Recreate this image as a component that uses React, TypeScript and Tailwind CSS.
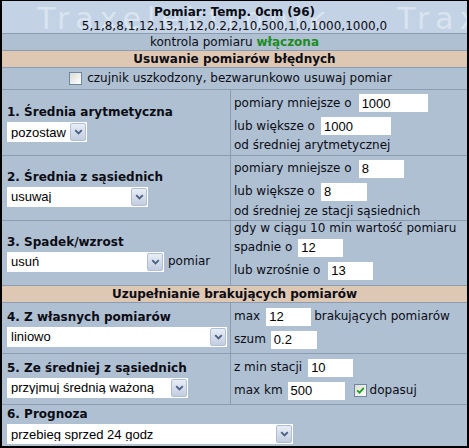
import React from "react";

function Chevron() {
  return (
    <svg width="9" height="6" viewBox="0 0 9 6">
      <path d="M1.2 1.2 L4.5 4.5 L7.8 1.2" fill="none" stroke="#4d6185" strokeWidth="1.9" />
    </svg>
  );
}

function Select({ value, className }: { value: string; className: string }) {
  return (
    <div className={`flex h-[20px] shrink-0 items-center bg-white ${className}`}>
      <span className="flex-1 overflow-hidden whitespace-nowrap pl-[4px] font-['Liberation_Sans',Arial,sans-serif] text-[13px] leading-none text-black">
        {value}
      </span>
      <span className="mr-[1px] flex h-[18px] w-[16px] items-center justify-center rounded-[2px] border border-[#b0bfd4] bg-linear-to-b from-[#e8eef6] to-[#c2cde0]">
        <Chevron />
      </span>
    </div>
  );
}

function Field({ value, className }: { value: string; className: string }) {
  return (
    <span
      className={`inline-flex h-[18px] shrink-0 items-center bg-white pl-[3px] font-['Liberation_Sans',Arial,sans-serif] text-[13px] leading-none text-black ${className}`}
    >
      {value}
    </span>
  );
}

function Check({ checked }: { checked?: boolean }) {
  return (
    <span className="flex h-[13px] w-[13px] shrink-0 items-center justify-center border border-[#6f86a3] bg-linear-to-br from-[#dcdcd4] to-[#ffffff]">
      {checked ? (
        <svg width="9" height="9" viewBox="0 0 9 9">
          <path d="M1.2 4.3 L3.5 6.6 L7.8 1.8" fill="none" stroke="#21a121" strokeWidth="1.8" />
        </svg>
      ) : null}
    </span>
  );
}

function Line({ children, h = "h-[23px]" }: { children: React.ReactNode; h?: string }) {
  return <div className={`flex items-center whitespace-nowrap ${h}`}>{children}</div>;
}

export default function App() {
  return (
    <div className="h-[448px] w-[469px] overflow-hidden border-b-2 border-l-2 border-r-2 border-t border-black bg-[#afc0d3] font-['DejaVu_Sans',Verdana,sans-serif] text-[12px] leading-[15px] text-[#0c0c14]">
      {/* title */}
      <div className="relative h-[33px] overflow-hidden border-b border-[#8c9db2] bg-[#c3d3e5]">
        <span
          aria-hidden="true"
          className="pointer-events-none absolute left-[-325px] top-[3px] select-none whitespace-nowrap text-[30px] leading-none tracking-[6px] text-[#d9e4f0]"
        >
          Traxelektronik
        </span>
        <span
          aria-hidden="true"
          className="pointer-events-none absolute left-[35px] top-[3px] select-none whitespace-nowrap text-[30px] leading-none tracking-[6px] text-[#d9e4f0]"
        >
          Traxelektronik
        </span>
        <span
          aria-hidden="true"
          className="pointer-events-none absolute left-[395px] top-[3px] select-none whitespace-nowrap text-[30px] leading-none tracking-[6px] text-[#d9e4f0]"
        >
          Traxelektronik
        </span>
        <div className="relative flex flex-col items-center pt-[4px] leading-[14px]">
          <div className="font-bold">Pomiar: Temp. 0cm (96)</div>
          <div>5,1,8,8,1,12,13,1,12,0.2,2,10,500,1,0,1000,1000,0</div>
        </div>
      </div>

      {/* kontrola */}
      <div className="flex h-[17px] items-center justify-center border-b border-[#8c9db2]">
        <span>
          kontrola pomiaru <span className="font-bold text-[#1e8c1e]">włączona</span>
        </span>
      </div>

      {/* header 1 */}
      <div className="flex h-[17px] items-center justify-center border-b border-[#8c9db2] bg-[#dfc8b3] font-bold">
        Usuwanie pomiarów błędnych
      </div>

      {/* checkbox row */}
      <div className="flex h-[22px] items-center justify-center gap-[5px] border-b border-[#8c9db2] pr-[8px]">
        <Check />
        <span className="whitespace-nowrap">czujnik uszkodzony, bezwarunkowo usuwaj pomiar</span>
      </div>

      {/* row 1 */}
      <div className="flex h-[66px] border-b border-[#8c9db2]">
        <div className="flex w-[229px] shrink-0 flex-col justify-center gap-[2px] border-r border-[#8c9db2] pl-[5px] pt-[2px]">
          <div className="font-bold">1. Średnia arytmetyczna</div>
          <Select value="pozostaw" className="w-[80px]" />
        </div>
        <div className="flex flex-1 flex-col justify-center pl-[3px]">
          <Line>
            <span>pomiary mniejsze o</span>
            <Field value="1000" className="ml-[7px] w-[69px]" />
          </Line>
          <Line>
            <span>lub większe o</span>
            <Field value="1000" className="ml-[6px] w-[70px]" />
          </Line>
          <Line h="h-[16px]">od średniej arytmetycznej</Line>
        </div>
      </div>

      {/* row 2 */}
      <div className="flex h-[65px] border-b border-[#8c9db2]">
        <div className="flex w-[229px] shrink-0 flex-col justify-center gap-[2px] border-r border-[#8c9db2] pl-[5px]">
          <div className="font-bold">2. Średnia z sąsiednich</div>
          <Select value="usuwaj" className="w-[141px]" />
        </div>
        <div className="flex flex-1 flex-col justify-center pl-[3px]">
          <Line>
            <span>pomiary mniejsze o</span>
            <Field value="8" className="ml-[7px] w-[45px]" />
          </Line>
          <Line>
            <span>lub większe o</span>
            <Field value="8" className="ml-[6px] w-[46px]" />
          </Line>
          <Line h="h-[16px]">od średniej ze stacji sąsiednich</Line>
        </div>
      </div>

      {/* row 3 */}
      <div className="flex h-[65px] border-b border-[#8c9db2]">
        <div className="flex w-[229px] shrink-0 flex-col justify-center gap-[2px] border-r border-[#8c9db2] pl-[5px]">
          <div className="font-bold">3. Spadek/wzrost</div>
          <div className="flex items-center">
            <Select value="usuń" className="w-[157px]" />
            <span className="ml-[4px]">pomiar</span>
          </div>
        </div>
        <div className="flex flex-1 flex-col justify-start pl-[3px]">
          <Line h="h-[15px]">gdy w ciągu 10 min wartość pomiaru</Line>
          <Line>
            <span>spadnie o</span>
            <Field value="12" className="ml-[6px] w-[45px]" />
          </Line>
          <Line>
            <span>lub wzrośnie o</span>
            <Field value="13" className="ml-[8px] w-[45px]" />
          </Line>
        </div>
      </div>

      {/* header 2 */}
      <div className="flex h-[17px] items-center justify-center border-b border-[#8c9db2] bg-[#dfc8b3] font-bold">
        Uzupełnianie brakujących pomiarów
      </div>

      {/* row 4 */}
      <div className="flex h-[51px] border-b border-[#8c9db2]">
        <div className="flex w-[229px] shrink-0 flex-col justify-center gap-[2px] border-r border-[#8c9db2] pl-[5px]">
          <div className="font-bold">4. Z własnych pomiarów</div>
          <Select value="liniowo" className="w-[220px]" />
        </div>
        <div className="flex flex-1 flex-col justify-center pl-[3px]">
          <Line>
            <span>max</span>
            <Field value="12" className="ml-[6px] w-[45px]" />
            <span className="ml-[3px]">brakujących pomiarów</span>
          </Line>
          <Line>
            <span>szum</span>
            <Field value="0.2" className="ml-[5px] w-[46px]" />
          </Line>
        </div>
      </div>

      {/* row 5 */}
      <div className="flex h-[51px] border-b border-[#8c9db2]">
        <div className="flex w-[229px] shrink-0 flex-col justify-center gap-[2px] border-r border-[#8c9db2] pl-[5px]">
          <div className="font-bold">5. Ze średniej z sąsiednich</div>
          <Select value="przyjmuj średnią ważoną" className="w-[181px]" />
        </div>
        <div className="flex flex-1 flex-col justify-center pl-[3px]">
          <Line>
            <span>z min stacji</span>
            <Field value="10" className="ml-[6px] w-[45px]" />
          </Line>
          <Line>
            <span>max km</span>
            <Field value="500" className="ml-[5px] w-[57px]" />
            <span className="ml-[9px]">
              <Check checked />
            </span>
            <span className="ml-[3px]">dopasuj</span>
          </Line>
        </div>
      </div>

      {/* row 6 */}
      <div className="flex h-[41px] flex-col justify-center gap-[2px] pl-[5px]">
        <div className="font-bold">6. Prognoza</div>
        <Select value="przebieg sprzed 24 godz" className="w-[286px]" />
      </div>
    </div>
  );
}
